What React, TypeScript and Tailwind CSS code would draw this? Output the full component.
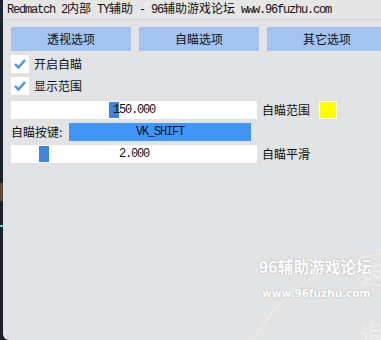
import React from 'react';

const mono = { fontFamily: '"Liberation Mono", "Noto Sans CJK SC", monospace' };

const Check = () => (
  <span className="flex h-[18px] w-[18px] items-center justify-center bg-white">
    <svg width="14" height="12" viewBox="0 0 14 12">
      <polyline points="2,6 5.5,9.5 12,2" fill="none" stroke="#4296fa" strokeWidth="2.4" />
    </svg>
  </span>
);

const Slider = ({ value, grab }: { value: string; grab: number }) => (
  <div className="relative flex h-[18px] w-[246px] items-center justify-center bg-white">
    <span className="absolute top-[1px] h-[16px] w-[10px] bg-[#3d85e0]" style={{ left: grab }} />
    <span className="relative text-[12px] tracking-[-1.2px] text-[#111]" style={mono}>
      {value}
    </span>
  </div>
);

export default function App() {
  return (
    <div
      className="relative flex h-[340px] w-[381px] overflow-hidden bg-[#1d232c]"
      style={{ fontFamily: '"Noto Sans CJK SC", "Noto Sans", sans-serif' }}
    >
      <div className="w-[3px] shrink-0" />
      <div className="relative flex flex-1 flex-col overflow-hidden rounded-bl-[6px] bg-[#e2e3e5]">
        <div className="flex h-[20px] items-center border-b border-[#cfd0d2] bg-[#e6e6e6] pl-[4px]">
          <span className="whitespace-nowrap text-[12px] tracking-[-1.2px] text-[#111]" style={mono}>
            Redmatch 2<span className="tracking-normal">内部</span> TY<span className="tracking-normal">辅助</span> - 96<span className="tracking-normal">辅助游戏论坛</span> www.96fuzhu.com
          </span>
        </div>

        <div className="flex flex-col gap-[4px] pl-[8px] pt-[7px] text-[12px] text-[#111]">
          <div className="flex gap-[8px]">
            {['透视选项', '自瞄选项', '其它选项'].map((t) => (
              <div key={t} className="flex h-[24px] w-[120px] shrink-0 items-center justify-center bg-[#a3c4ee]">
                {t}
              </div>
            ))}
          </div>

          <div className="flex h-[18px] items-center gap-[5px]">
            <Check />
            <span>开启自瞄</span>
          </div>
          <div className="flex h-[18px] items-center gap-[5px]">
            <Check />
            <span>显示范围</span>
          </div>

          <div className="mt-[2px] flex items-center gap-[5px]">
            <Slider value="150.000" grab={98} />
            <span>自瞄范围</span>
            <span className="ml-[4px] h-[18px] w-[18px] border border-white bg-[#ffff00]" />
          </div>

          <div className="flex items-center gap-[4px]">
            <span className="w-[54px]">自瞄按键:</span>
            <div className="flex h-[18px] w-[182px] items-center justify-center bg-[#4296fa]">
              <span className="text-[12px] tracking-[-1.2px] text-[#111]" style={mono}>VK_SHIFT</span>
            </div>
          </div>

          <div className="flex items-center gap-[5px]">
            <Slider value="2.000" grab={28} />
            <span>自瞄平滑</span>
          </div>
        </div>

        {/* faint background decor */}
        <div className="absolute left-0 top-[226px] h-[120px] w-[33px] border-r border-t border-[#d8ecec]" />
        <svg className="absolute left-0 top-0" width="378" height="340">
          <circle cx="397" cy="420" r="167" fill="none" stroke="#eeeedd" strokeWidth="1.2" />
        </svg>
        <span className="absolute left-[358px] top-[262px] text-[24px] leading-none text-[#ececec]">返</span>
        <span className="absolute left-[358px] top-[322px] text-[24px] leading-none text-[#ececec]">返</span>
        <div className="absolute left-[256px] top-[259px] whitespace-nowrap text-[15.5px] font-bold leading-none tracking-[0.2px] text-white [text-shadow:0_0_2px_rgba(0,0,0,0.25)]">
          96辅助游戏论坛
        </div>
        <div
          className="absolute left-[259px] top-[288px] whitespace-nowrap text-[10.5px] font-bold leading-none tracking-[0px] text-white [text-shadow:0_0_2px_rgba(0,0,0,0.25)]"
          style={{ fontFamily: '"DejaVu Sans", sans-serif' }}
        >
          www.96fuzhu.com
        </div>
      </div>
      <div className="absolute left-0 top-[225px] h-[2px] w-[3px] bg-[#3fe0d0]" />
      <div className="absolute left-0 top-[183px] h-[18px] w-[3px] bg-[#5a4a40]" />
    </div>
  );
}
